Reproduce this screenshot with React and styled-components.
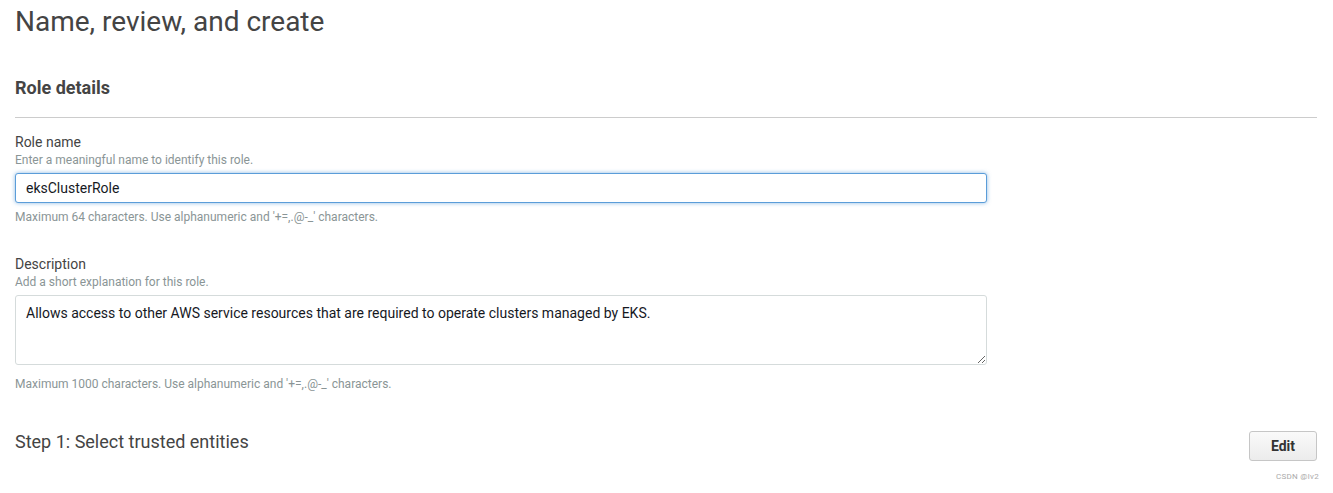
import React from 'react';
import styled, { createGlobalStyle } from 'styled-components';

const GlobalStyle = createGlobalStyle`
  body {
    margin: 0;
    background: #fff;
    font-family: Roboto, "Liberation Sans", Arial, sans-serif;
  }
`;

const Page = styled.main`
  padding: 0 16px 0 15px;
  color: #444;
`;

const Title = styled.h1`
  margin: 5px 0 0;
  font-size: 28px;
  line-height: 34px;
  font-weight: 400;
  color: #444;
`;

const SectionTitle = styled.h2`
  margin: 38px 0 0;
  font-size: 18px;
  line-height: 22px;
  font-weight: 700;
  color: #444;
`;

const Divider = styled.hr`
  margin: 18px 0 0;
  border: 0;
  border-top: 1px solid #cccccc;
`;

const Field = styled.div`
  margin-top: ${({ $top }) => $top}px;
  width: 972px;
  display: flex;
  flex-direction: column;
`;

const Label = styled.label`
  font-size: 14px;
  line-height: 18px;
  color: #444;
`;

const Hint = styled.div`
  margin-top: ${({ $top }) => $top || 0}px;
  font-size: 12px;
  line-height: 15px;
  color: #8a9596;
`;

const TextInput = styled.input`
  box-sizing: border-box;
  margin-top: 5px;
  height: 30px;
  padding: 0 10px;
  border: 1px solid #5b9dd9;
  border-radius: 3px;
  box-shadow: 0 0 4px rgba(91, 157, 217, 0.7);
  font-family: inherit;
  font-size: 14px;
  color: #16191f;
  outline: none;
`;

const TextArea = styled.textarea`
  box-sizing: border-box;
  margin-top: 5px;
  height: 70px;
  padding: 8px 10px;
  border: 1px solid #d5dbdb;
  border-radius: 3px;
  font-family: inherit;
  font-size: 14px;
  line-height: 18px;
  color: #16191f;
  resize: vertical;
  outline: none;
`;

const StepRow = styled.div`
  margin-top: 39px;
  display: flex;
  justify-content: space-between;
  align-items: flex-start;
`;

const StepTitle = styled.h3`
  margin: 0;
  font-size: 18px;
  line-height: 22px;
  font-weight: 400;
  color: #444;
`;

const Button = styled.button`
  width: 68px;
  height: 30px;
  border: 1px solid #c6c6c6;
  border-radius: 3px;
  background: linear-gradient(#fafafa, #ececec);
  font-family: inherit;
  font-size: 14px;
  font-weight: 700;
  color: #333;
  cursor: pointer;
`;

const Watermark = styled.div`
  margin-top: 11px;
  text-align: right;
  font-size: 8px;
  letter-spacing: 0.3px;
  color: #aaa;
  margin-right: -2px;
`;

export default function App() {
  return (
    <Page>
      <GlobalStyle />
      <Title>Name, review, and create</Title>
      <SectionTitle>Role details</SectionTitle>
      <Divider />

      <Field $top={15}>
        <Label>Role name</Label>
        <Hint $top={2}>Enter a meaningful name to identify this role.</Hint>
        <TextInput defaultValue="eksClusterRole" />
        <Hint $top={7}>Maximum 64 characters. Use alphanumeric and '+=,.@-_' characters.</Hint>
      </Field>

      <Field $top={30}>
        <Label>Description</Label>
        <Hint $top={2}>Add a short explanation for this role.</Hint>
        <TextArea defaultValue="Allows access to other AWS service resources that are required to operate clusters managed by EKS." />
        <Hint $top={12}>Maximum 1000 characters. Use alphanumeric and '+=,.@-_' characters.</Hint>
      </Field>

      <StepRow>
        <StepTitle>Step 1: Select trusted entities</StepTitle>
        <Button>Edit</Button>
      </StepRow>
      <Watermark>CSDN @lv2</Watermark>
    </Page>
  );
}
